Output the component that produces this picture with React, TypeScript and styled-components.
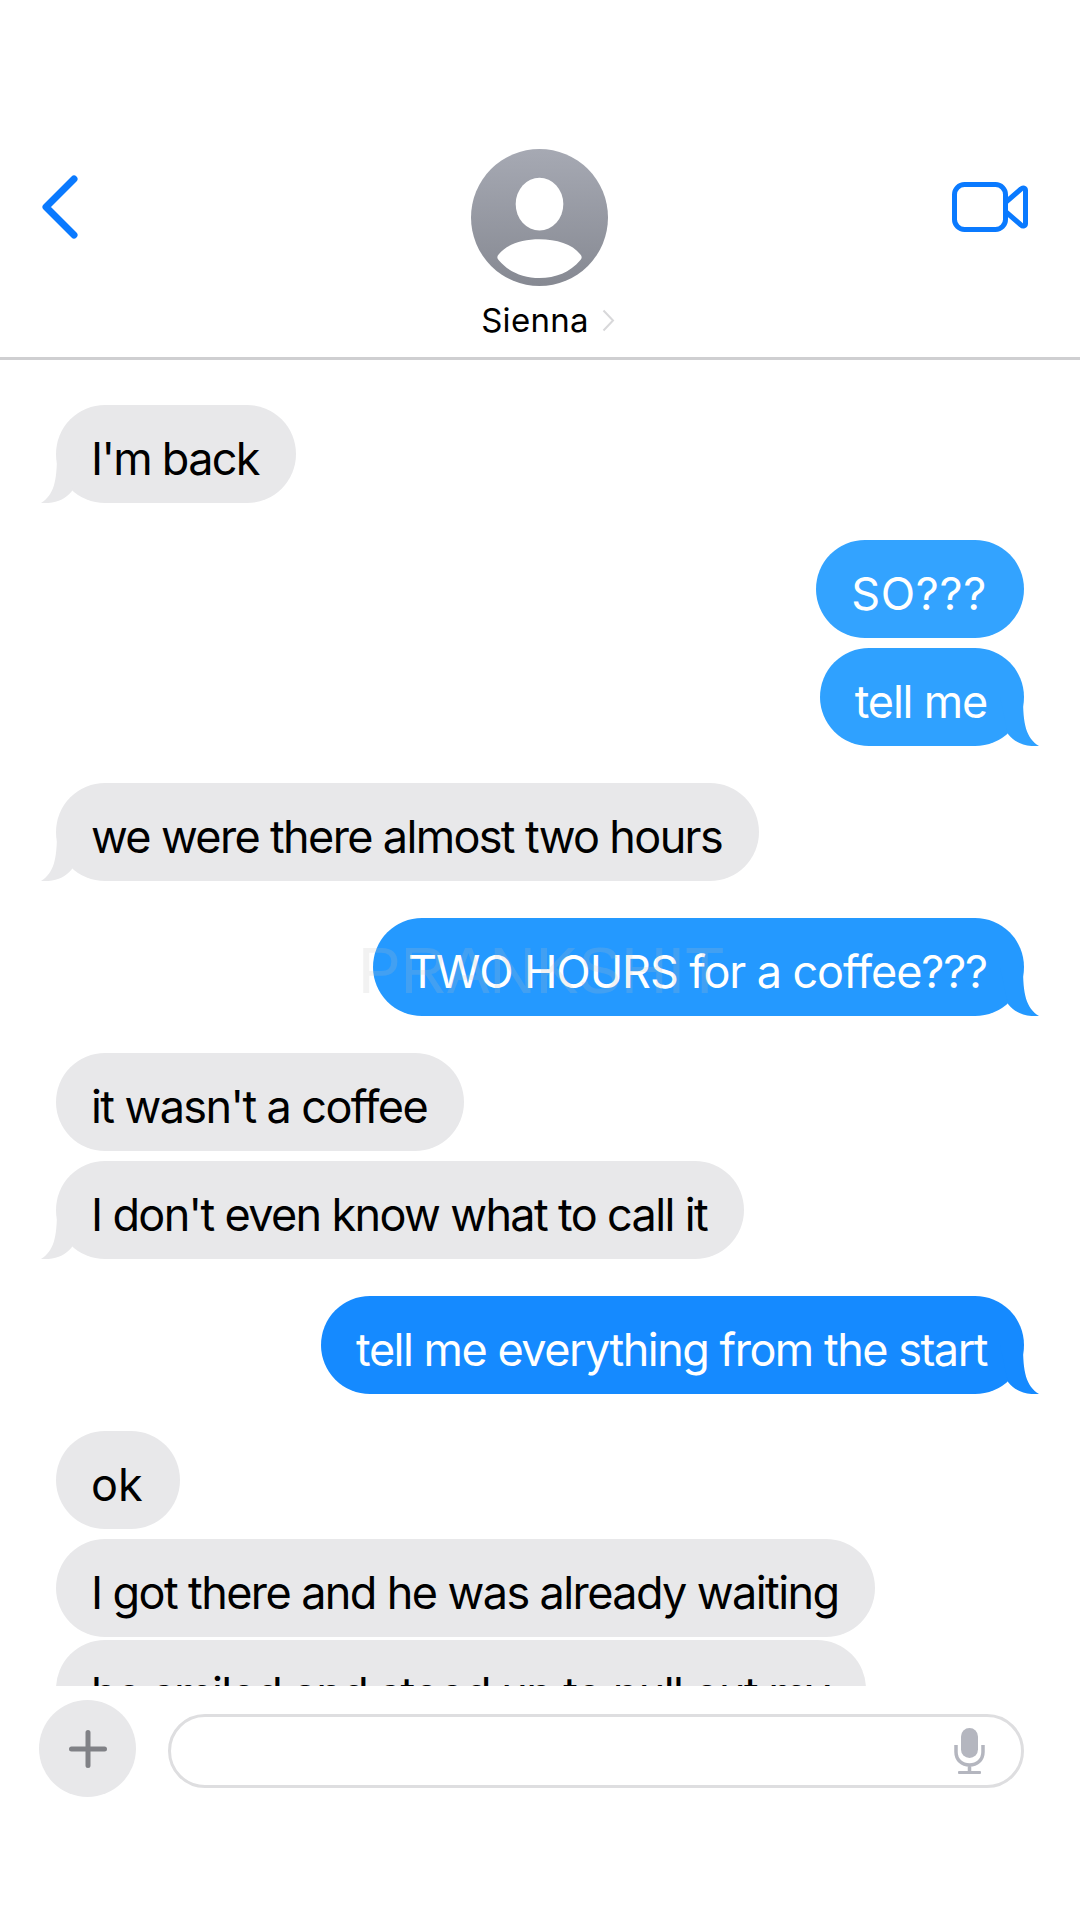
import React from 'react';
import styled, { createGlobalStyle } from 'styled-components';

const GlobalStyle = createGlobalStyle`
  html, body { margin: 0; padding: 0; background: #fff; }
  body { font-family: Inter, "Liberation Sans", sans-serif; }
`;

type Sender = 'them' | 'me';
type Msg = { text: string; from: Sender; color?: string; tail?: boolean; gap: number; tracking: number };

const GREY = '#e8e8ea';

const messages: Msg[] = [
  { text: "I'm back", from: 'them', tail: true, gap: 0, tracking: -1.7 },
  { text: 'SO???', from: 'me', color: '#33a3ff', gap: 37, tracking: 0.7 },
  { text: 'tell me', from: 'me', color: '#2fa1ff', tail: true, gap: 10, tracking: -1.2 },
  { text: 'we were there almost two hours', from: 'them', tail: true, gap: 37, tracking: -1.65 },
  { text: 'TWO HOURS for a coffee???', from: 'me', color: '#2499ff', tail: true, gap: 37, tracking: -1.1 },
  { text: "it wasn't a coffee", from: 'them', gap: 37, tracking: -1.6 },
  { text: "I don't even know what to call it", from: 'them', tail: true, gap: 10, tracking: -1.65 },
  { text: 'tell me everything from the start', from: 'me', color: '#158aff', tail: true, gap: 37, tracking: -1.5 },
  { text: 'ok', from: 'them', gap: 37, tracking: 0 },
  { text: 'I got there and he was already waiting', from: 'them', gap: 10, tracking: -1.6 },
  { text: 'he smiled and stood up to pull out my', from: 'them', gap: 3, tracking: -1.55 },
];

export default function App() {
  return (
    <Page>
      <GlobalStyle />
      <Header>
        <BackIcon viewBox="0 0 40 68">
          <path d="M34 6 6 34l28 28" />
        </BackIcon>
        <Contact>
          <Avatar viewBox="0 0 138 138">
            <defs>
              <linearGradient id="avatarFill" x1="0" y1="0" x2="0" y2="1">
                <stop offset="0" stopColor="#a6a9b3" />
                <stop offset="1" stopColor="#868992" />
              </linearGradient>
            </defs>
            <circle cx="69" cy="69" r="69" fill="url(#avatarFill)" />
            <ellipse cx="69" cy="55.5" rx="24" ry="26.5" fill="#fff" />
            <path
              d="M28 106C36 96 52 91 69 91s33 5 41 15c2 2 2 4 0 6-10 12-25 18-41 18s-31-6-41-18c-2-2-2-4 0-6Z"
              fill="#fff"
            />
          </Avatar>
          <NameRow>
            <Name>Sienna</Name>
            <Chevron viewBox="0 0 13 23">
              <path d="M1.5 1.5 11 11.5l-9.5 10" />
            </Chevron>
          </NameRow>
        </Contact>
        <VideoIcon viewBox="0 0 76 50">
          <rect x="2.5" y="2.5" width="51" height="45" rx="10" />
          <path d="M54 20 69 7c2-2 4.500-1 4.500 1.500v33c0 2.500-2.500 3.500-4.500 1.500L54 30" />
        </VideoIcon>
      </Header>
      <Thread>
        {messages.map((m, i) => (
          <Row key={i} from={m.from} gap={m.gap}>
            <Bubble from={m.from} color={m.color} tracking={m.tracking}>
              {m.tail && (
                <Tail from={m.from} viewBox="0 0 40 66" fill={m.from === 'me' ? m.color : GREY}>
                  <path d="M23 17C23 44 26 58 39 66 26 67 15 63 8 54L0 17Z" />
                </Tail>
              )}
              <BubbleText>{m.text}</BubbleText>
            </Bubble>
          </Row>
        ))}
        <Watermark>PRANKSHIT</Watermark>
      </Thread>
      <Composer>
        <PlusButton>
          <svg width="38" height="38" viewBox="0 0 38 38" stroke="#808186" strokeWidth="5" strokeLinecap="round" fill="none">
            <path d="M19 2.500v33M2.500 19h33" />
          </svg>
        </PlusButton>
        <InputBox>
          <svg width="32" height="46" viewBox="0 0 32 46" fill="none">
            <rect x="7" y="0" width="17" height="30" rx="8.500" fill="#b4b6bf" />
            <path d="M2 17v7c0 8 6 13 13.500 13S29 32 29 24v-7M15.500 37v7" stroke="#b4b6bf" strokeWidth="3.500" />
            <rect x="4" y="43" width="23" height="3" rx="1" fill="#b4b6bf" />
          </svg>
        </InputBox>
      </Composer>
    </Page>
  );
}

const Page = styled.div`
  width: 1080px;
  height: 1920px;
  background: #fff;
  display: flex;
  flex-direction: column;
  overflow: hidden;
`;

const Header = styled.header`
  height: 360px;
  box-sizing: border-box;
  padding: 149px 52px 0 40px;
  border-bottom: 3px solid #cfcfd1;
  display: grid;
  grid-template-columns: 1fr auto 1fr;
  align-items: start;
`;

const BackIcon = styled.svg`
  width: 40px;
  height: 68px;
  margin-top: 24px;
  fill: none;
  stroke: #0a7aff;
  stroke-width: 7;
  stroke-linecap: round;
  stroke-linejoin: round;
`;

const Contact = styled.div`
  display: flex;
  flex-direction: column;
  align-items: center;
  margin-left: 12px;
`;

const Avatar = styled.svg`
  width: 137px;
  height: 137px;
`;

const NameRow = styled.div`
  display: flex;
  align-items: center;
  gap: 13px;
  margin: 14px 0 0 16px;
`;

const Name = styled.span`
  font-size: 33px;
  line-height: 40px;
  letter-spacing: 0.3px;
  color: #000;
`;

const Chevron = styled.svg`
  width: 13px;
  height: 23px;
  fill: none;
  stroke: #d8d8da;
  stroke-width: 2;
`;

const VideoIcon = styled.svg`
  width: 76px;
  height: 50px;
  margin-top: 33px;
  justify-self: end;
  fill: none;
  stroke: #0a7aff;
  stroke-width: 5;
  stroke-linejoin: round;
`;

const Thread = styled.main`
  position: relative;
  height: 1326px;
  box-sizing: border-box;
  padding: 45px 56px 0;
  overflow: hidden;
  flex-shrink: 0;
`;

const Row = styled.div<{ from: Sender; gap: number }>`
  display: flex;
  justify-content: ${p => (p.from === 'me' ? 'flex-end' : 'flex-start')};
  margin-top: ${p => p.gap}px;
`;

const Bubble = styled.div<{ from: Sender; color?: string; tracking: number }>`
  position: relative;
  box-sizing: border-box;
  height: 98px;
  padding: 8px 37px 0 35px;
  display: flex;
  align-items: center;
  border-radius: 49px;
  white-space: nowrap;
  font-size: 45px;
  letter-spacing: ${p => p.tracking}px;
  color: ${p => (p.from === 'me' ? '#fff' : '#000')};
  background: ${p => (p.from === 'me' ? p.color : GREY)};
`;

const BubbleText = styled.span`
  position: relative;
`;

const Tail = styled.svg<{ from: Sender }>`
  position: absolute;
  bottom: 0;
  width: 40px;
  height: 66px;
  ${p => (p.from === 'me' ? 'right: -16px;' : 'left: -16px; transform: scaleX(-1);')}
`;

const Watermark = styled.div`
  position: absolute;
  left: 358px;
  top: 576px;
  font-family: "Liberation Sans", sans-serif;
  font-size: 64px;
  line-height: 70px;
  color: rgba(190, 190, 190, 0.2);
  white-space: nowrap;
`;

const Composer = styled.footer`
  display: flex;
  align-items: flex-start;
  gap: 32px;
  padding: 14px 56px 0 39px;
`;

const PlusButton = styled.div`
  width: 97px;
  height: 97px;
  border-radius: 50%;
  background: ${GREY};
  display: flex;
  align-items: center;
  justify-content: center;
  flex-shrink: 0;
`;

const InputBox = styled.div`
  flex: 1;
  height: 74px;
  margin-top: 14px;
  box-sizing: border-box;
  border: 3px solid #dedee0;
  border-radius: 37px;
  display: flex;
  align-items: center;
  justify-content: flex-end;
  padding-right: 35px;
`;
